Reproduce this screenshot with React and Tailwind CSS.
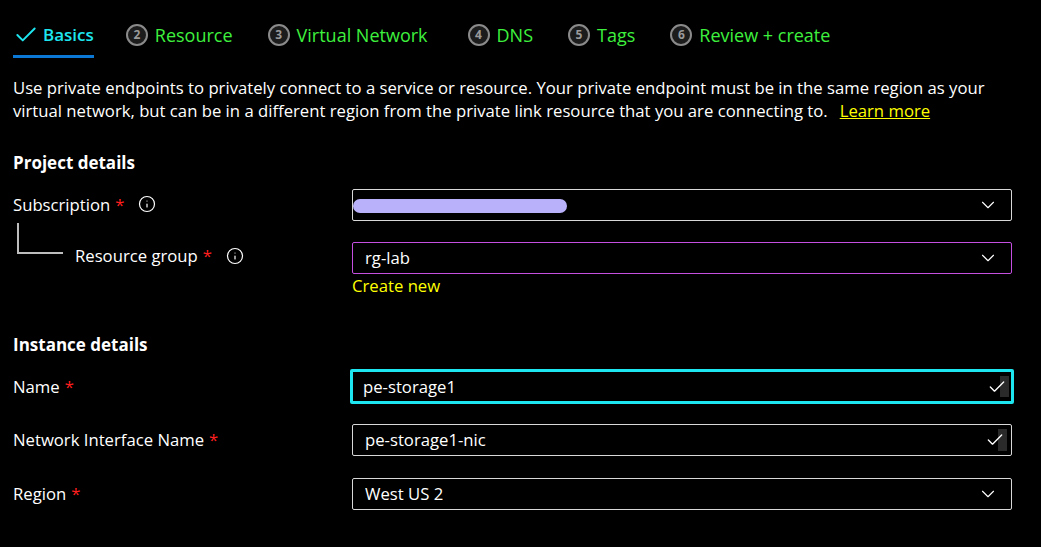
import { ChevronDown, Check, Info } from 'lucide-react'

const steps = [
  { n: 2, label: 'Resource', ml: 'ml-[32px]' },
  { n: 3, label: 'Virtual Network', ml: 'ml-[35px]' },
  { n: 4, label: 'DNS', ml: 'ml-[40px]' },
  { n: 5, label: 'Tags', ml: 'ml-[35px]' },
  { n: 6, label: 'Review + create', ml: 'ml-[35px]' },
]

function StepCircle({ n }) {
  return (
    <span className="w-[22px] h-[22px] rounded-full border-2 border-[#8a8a8a] bg-[#1c1c1c] text-[#9a9a9a] text-[12px] font-bold flex items-center justify-center leading-none">
      {n}
    </span>
  )
}

function Label({ children, info, className = '' }) {
  return (
    <div className={`flex items-center text-white ${className}`}>
      <span>{children}</span>
      <span className="text-[#ff1f1f] ml-[5px]">*</span>
      {info && <Info size={18} strokeWidth={1.6} className="ml-[14px] text-white" />}
    </div>
  )
}

function Field({ children, border = 'border-[#d8d8d8]', icon = 'chevron', thick = false }) {
  return (
    <div
      className={`flex items-center justify-between bg-black ${
        thick ? `border-[3px] ${border} h-[35px] -mx-[2px] pl-[10px] pr-[2px]` : `border ${border} h-[32px] pl-[12px] pr-[4px]`
      } rounded-[2px]`}
    >
      <div className="text-white truncate">{children}</div>
      {icon === 'chevron' ? (
        <ChevronDown size={22} strokeWidth={1.2} className="text-white mr-[8px]" />
      ) : (
        <div className="relative flex items-center h-full">
          <Check size={20} strokeWidth={1.6} className="text-white relative z-10 mr-[2px]" />
          <span className="absolute right-0 top-[4px] bottom-[4px] w-[9px] bg-[#2a2a2a]" />
        </div>
      )}
    </div>
  )
}

export default function App() {
  return (
    <div
      className="w-[1041px] h-[547px] bg-black text-white text-[16.7px] overflow-hidden"
      style={{ fontFamily: '"Open Sans", "Noto Sans", sans-serif' }}
    >
      {/* Tabs */}
      <div className="flex items-center h-[70px] pl-[13px]">
        <div className="relative flex items-center h-full">
          <Check size={26} strokeWidth={1.8} className="text-[#1ee6f0]" />
          <span className="ml-[4px] text-[17px] font-semibold text-[#1ee6f0]">Basics</span>
          <span className="absolute left-0 right-0 top-[55px] h-[3px] bg-[#0a78d4]" />
        </div>
        {steps.map((s) => (
          <div key={s.n} className={`flex items-center gap-[7px] ${s.ml}`}>
            <StepCircle n={s.n} />
            <span className="text-[18px] text-[#3ef03e]">{s.label}</span>
          </div>
        ))}
      </div>

      {/* Intro */}
      <p className="px-[13px] leading-[23px] mt-[6px] whitespace-nowrap">
        Use private endpoints to privately connect to a service or resource. Your private endpoint must be in the same region as your
        <br />
        virtual network, but can be in a different region from the private link resource that you are connecting to.
        <a className="ml-[12px] text-[#ffff00] underline">Learn more</a>
      </p>

      {/* Project details */}
      <div className="px-[13px] mt-[28px]">
        <h2 className="font-bold text-[17px]">Project details</h2>

        <div className="grid grid-cols-[339px_660px] mt-[13px] items-center">
          <Label info>Subscription</Label>
          <div className="relative">
            <Field>
              <span className="block w-[200px] h-[14px]" />
            </Field>
            <span className="absolute left-[1px] top-[10px] w-[214px] h-[14px] rounded-full bg-[#b9b2fa] blur-[0.5px]" />
          </div>
        </div>

        <div className="grid grid-cols-[339px_660px] mt-[21px]">
          <div className="flex">
            <div className="ml-[4px] w-[46px] h-[31px] -mt-[19px] border-l-2 border-b-2 border-[#bdbdbd]" />
            <Label info className="ml-[12px] h-[32px] -mt-[2px]">Resource group</Label>
          </div>
          <div>
            <Field border="border-[#c44fe0]">rg-lab</Field>
            <div className="text-[#ffff00] mt-[1px] leading-[22px]">Create new</div>
          </div>
        </div>
      </div>

      {/* Instance details */}
      <div className="px-[13px] mt-[35px]">
        <h2 className="font-bold text-[17px]">Instance details</h2>

        <div className="grid grid-cols-[339px_660px] mt-[12px] items-center">
          <Label>Name</Label>
          <Field border="border-[#1ee6f0]" icon="check" thick>
            pe-storage1
          </Field>
        </div>

        <div className="grid grid-cols-[339px_660px] mt-[20px] items-center">
          <Label>Network Interface Name</Label>
          <Field icon="check">pe-storage1-nic</Field>
        </div>

        <div className="grid grid-cols-[339px_660px] mt-[22px] items-center">
          <Label>Region</Label>
          <Field>West US 2</Field>
        </div>
      </div>
    </div>
  )
}
